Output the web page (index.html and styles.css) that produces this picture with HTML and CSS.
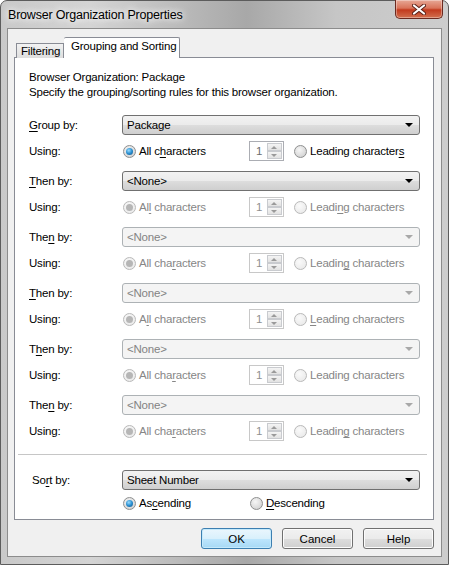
FILE: index.html
```html
<!DOCTYPE html>
<html lang="en">
<head>
  <meta charset="UTF-8" />
  <title>Browser Organization Properties</title>
  <link rel="stylesheet" href="styles.css">
</head>
<body>
  <div class="window">
    <div class="titlebar">
      <span class="title">Browser Organization Properties</span>
      <button class="close" aria-label="Close">
        <svg width="14" height="11" viewBox="0 0 14 11">
          <path d="M2 1.5 L12 9.5 M12 1.5 L2 9.5" stroke="#5a2118" stroke-width="4" stroke-linecap="round"/>
          <path d="M2 1.5 L12 9.5 M12 1.5 L2 9.5" stroke="#fff" stroke-width="2.2" stroke-linecap="round"/>
        </svg>
      </button>
    </div>

    <div class="client">
      <div class="tabs">
        <div class="tab">Filtering</div>
        <div class="tab active">Grouping and Sorting</div>
      </div>

      <div class="panel">
        <p class="intro">Browser Organization: Package<br>Specify the grouping/sorting rules for this browser organization.</p>

        <div class="groups">
          <!-- first level: everything enabled -->
          <div class="group">
            <div class="row">
              <span class="lbl"><u>G</u>roup by:</span>
              <div class="combo">Package<span class="arrow"></span></div>
            </div>
            <div class="row">
              <span class="lbl">Using:</span>
              <span class="opt wide"><span class="radio on"></span><span>All c<u>h</u>aracters</span></span>
              <span class="spin"><span class="val">1</span><span class="btns"><i class="up"></i><i class="down"></i></span></span>
              <span class="opt"><span class="radio"></span><span>Leading character<u>s</u></span></span>
            </div>
          </div>

          <div class="group">
            <div class="row">
              <span class="lbl"><u>T</u>hen by:</span>
              <div class="combo">&lt;None&gt;<span class="arrow"></span></div>
            </div>
            <div class="row dim">
              <span class="lbl">Using:</span>
              <span class="opt wide"><span class="radio on"></span><span>Al<u>l</u> characters</span></span>
              <span class="spin"><span class="val">1</span><span class="btns"><i class="up"></i><i class="down"></i></span></span>
              <span class="opt"><span class="radio"></span><span>Leadi<u>n</u>g characters</span></span>
            </div>
          </div>

          <div class="group">
            <div class="row">
              <span class="lbl">The<u>n</u> by:</span>
              <div class="combo off">&lt;None&gt;<span class="arrow"></span></div>
            </div>
            <div class="row dim">
              <span class="lbl">Using:</span>
              <span class="opt wide"><span class="radio on"></span><span>All cha<u>r</u>acters</span></span>
              <span class="spin"><span class="val">1</span><span class="btns"><i class="up"></i><i class="down"></i></span></span>
              <span class="opt"><span class="radio"></span><span>Leadin<u>g</u> characters</span></span>
            </div>
          </div>

          <div class="group">
            <div class="row">
              <span class="lbl"><u>T</u>hen by:</span>
              <div class="combo off">&lt;None&gt;<span class="arrow"></span></div>
            </div>
            <div class="row dim">
              <span class="lbl">Using:</span>
              <span class="opt wide"><span class="radio on"></span><span>A<u>l</u>l characters</span></span>
              <span class="spin"><span class="val">1</span><span class="btns"><i class="up"></i><i class="down"></i></span></span>
              <span class="opt"><span class="radio"></span><span><u>L</u>eading characters</span></span>
            </div>
          </div>

          <div class="group">
            <div class="row">
              <span class="lbl">T<u>h</u>en by:</span>
              <div class="combo off">&lt;None&gt;<span class="arrow"></span></div>
            </div>
            <div class="row dim">
              <span class="lbl">Using:</span>
              <span class="opt wide"><span class="radio on"></span><span>All cha<u>r</u>acters</span></span>
              <span class="spin"><span class="val">1</span><span class="btns"><i class="up"></i><i class="down"></i></span></span>
              <span class="opt"><span class="radio"></span><span>Leading characters</span></span>
            </div>
          </div>

          <div class="group">
            <div class="row">
              <span class="lbl">The<u>n</u> by:</span>
              <div class="combo off">&lt;None&gt;<span class="arrow"></span></div>
            </div>
            <div class="row dim">
              <span class="lbl">Using:</span>
              <span class="opt wide"><span class="radio on"></span><span>All cha<u>r</u>acters</span></span>
              <span class="spin"><span class="val">1</span><span class="btns"><i class="up"></i><i class="down"></i></span></span>
              <span class="opt"><span class="radio"></span><span>Leadin<u>g</u> characters</span></span>
            </div>
          </div>
        </div>

        <hr class="sep">

        <div class="row">
          <span class="lbl sort">So<u>r</u>t by:</span>
          <div class="combo">Sheet Number<span class="arrow"></span></div>
        </div>
        <div class="row order">
          <span class="lbl"></span>
          <span class="opt wide"><span class="radio on"></span><span>As<u>c</u>ending</span></span>
          <span class="opt"><span class="radio"></span><span><u>D</u>escending</span></span>
        </div>
      </div>

      <div class="buttons">
        <button class="btn default">OK</button>
        <button class="btn">Cancel</button>
        <button class="btn">Help</button>
      </div>
    </div>
  </div>
</body>
</html>
```

FILE: styles.css
```css
* { margin: 0; padding: 0; box-sizing: border-box; }
body {
  width: 449px;
  height: 565px;
  overflow: hidden;
  font-family: "Liberation Sans", Arial, sans-serif;
  font-size: 11.5px;
  letter-spacing: -0.2px;
  color: #000;
  background: #fff;
}
u { text-decoration: underline; text-underline-offset: 2px; }

/* window frame */
.window {
  height: 565px;
  display: flex;
  flex-direction: column;
  border: 1px solid #5c5c5c;
  border-radius: 7px 7px 0 0;
  padding: 0 6px 7px 6px;
  background: linear-gradient(90deg, #c9c9c9 0%, #d4d4d4 20%, #b4b4b4 45%, #a8a8a8 55%, #c6c6c6 75%, #cdcdcd 100%);
}
.titlebar {
  height: 27px;
  display: flex;
  justify-content: space-between;
  align-items: flex-start;
}
.title {
  margin: 7px 0 0 1px;
  font-size: 12.5px;
  text-shadow: 0 0 6px #fff, 0 0 10px #fff;
}
.close {
  width: 48px;
  height: 19px;
  margin-right: -1px;
  margin-top: -1px;
  border: 1px solid #6b2a20;
  border-top: none;
  border-radius: 0 0 5px 5px;
  background: linear-gradient(#e7a896 0%, #d9735a 45%, #c23a1e 55%, #d2704f 100%);
  box-shadow: inset 0 0 0 1px rgba(255,255,255,0.35);
  display: flex;
  align-items: center;
  justify-content: center;
}

/* dialog body */
.client {
  flex: 1;
  background: #f0f0f0;
  border: 1px solid #8c8c8c;
  padding: 8px 7px 0 6px;
}
.tabs {
  display: flex;
  align-items: flex-end;
  height: 20px;
  margin-left: 2px;
}
.tab {
  height: 15px;
  width: 48px;
  padding-left: 4px;
  line-height: 15px;
  white-space: nowrap;
  border: 1px solid #898c95;
  border-bottom: none;
  background: linear-gradient(#f2f2f2, #dedede);
  margin-bottom: -1px;
}
.tab.active {
  height: 21px;
  width: 116px;
  padding-left: 7px;
  line-height: 17px;
  background: #fff;
  border-left: none;
  border-radius: 2px 2px 0 0;
}
.panel {
  height: 463px;
  background: #fff;
  border: 1px solid #898c95;
  padding: 12px 12px 0 14px;
}
.intro { line-height: 15px; }

.groups {
  margin-top: 15px;
  display: flex;
  flex-direction: column;
  gap: 10px;
}
.group {
  display: flex;
  flex-direction: column;
  gap: 6px;
}
.row {
  height: 20px;
  display: flex;
  align-items: center;
}
.lbl { width: 93px; flex: none; }
.lbl.sort { padding-left: 3px; }

/* drop-down lists */
.combo {
  position: relative;
  width: 298px;
  height: 20px;
  line-height: 18px;
  padding-left: 4px;
  border: 1px solid #707070;
  border-radius: 3px;
  background: linear-gradient(#f2f2f2 0%, #ebebeb 50%, #dddddd 51%, #cfcfcf 100%);
}
.combo .arrow {
  position: absolute;
  right: 6px;
  top: 7px;
  border-left: 4px solid transparent;
  border-right: 4px solid transparent;
  border-top: 4px solid #000;
}
.combo.off {
  border-color: #adb2b5;
  background: #f4f4f4;
  color: #838383;
}
.combo.off .arrow { border-top-color: #a8a8a8; }

/* radio buttons */
.opt {
  display: flex;
  align-items: center;
  gap: 3px;
  white-space: nowrap;
}
.opt.wide { width: 127px; }
.radio {
  width: 13px;
  height: 13px;
  margin-left: 1px;
  border-radius: 50%;
  border: 1px solid #8e8f8f;
  background: radial-gradient(circle at 40% 35%, #f6f6f6 0%, #dcdcdc 60%, #c8c8c8 100%);
  display: flex;
  align-items: center;
  justify-content: center;
}
.radio.on::after {
  content: "";
  width: 7px;
  height: 7px;
  border-radius: 50%;
  background: radial-gradient(circle at 40% 35%, #9adcff 0%, #2a8fd0 50%, #134f80 100%);
}
.dim .opt { color: #868686; }
.dim .radio {
  border-color: #b9b9b9;
  background: radial-gradient(circle at 40% 35%, #fafafa 0%, #e6e6e6 100%);
}
.dim .radio.on::after { background: #b6b6b6; }

/* numeric spinner */
.spin {
  width: 35px;
  height: 20px;
  display: flex;
  justify-content: space-between;
  border: 1px solid #abadb3;
  margin-right: 9px;
  background: #fff;
}
.spin .val { padding: 2px 0 0 6px; line-height: 15px; color: #6d6d6d; }
.spin .btns {
  width: 15px;
  display: flex;
  flex-direction: column;
  margin: 1px;
}
.spin i {
  flex: 1;
  position: relative;
  border: 1px solid #c9cbcf;
  background: linear-gradient(#f4f4f4, #e2e2e2);
}
.spin i::after {
  content: "";
  position: absolute;
  left: 3px;
  top: 2px;
  border-left: 3px solid transparent;
  border-right: 3px solid transparent;
}
.spin .up::after { border-bottom: 3px solid #9a9a9a; }
.spin .down::after { border-top: 3px solid #9a9a9a; }
.dim .spin { border-color: #c8c8c8; }
.dim .spin .val { color: #8f8f8f; }

.sep {
  border: none;
  border-top: 1px solid #c6c6c6;
  margin: 13px -6px 15px -11px;
}
.order { height: 16px; margin-top: 5px; }

/* dialog buttons */
.buttons {
  margin-top: 8px;
  display: flex;
  justify-content: flex-end;
  gap: 10px;
}
.btn {
  width: 71px;
  height: 21px;
  font: inherit;
  border: 1px solid #707070;
  border-radius: 3px;
  background: linear-gradient(#f2f2f2 0%, #ebebeb 50%, #dddddd 51%, #cfcfcf 100%);
  box-shadow: inset 0 0 0 1px #fcfcfc;
}
.btn.default {
  border-color: #3c7fb1;
  background: linear-gradient(#eaf6fd 0%, #d9f0fc 50%, #bee6fd 51%, #a7d9f5 100%);
  box-shadow: inset 0 0 0 1px #c5eafc;
}
```
